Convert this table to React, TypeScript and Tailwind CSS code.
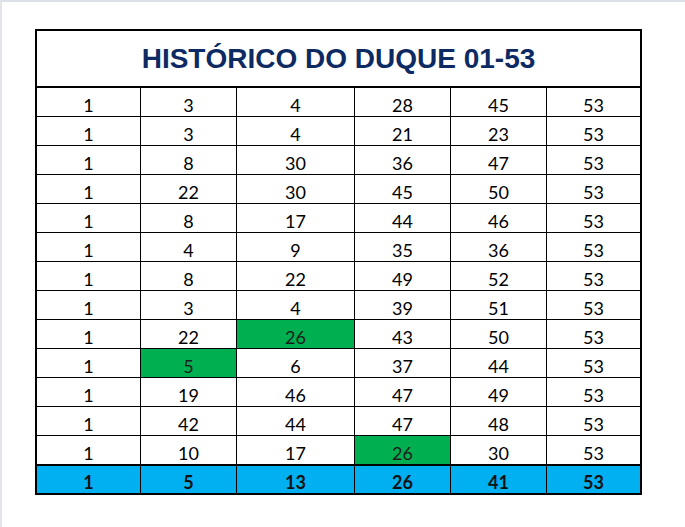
import React from "react";

const rows: number[][] = [
  [1, 3, 4, 28, 45, 53],
  [1, 3, 4, 21, 23, 53],
  [1, 8, 30, 36, 47, 53],
  [1, 22, 30, 45, 50, 53],
  [1, 8, 17, 44, 46, 53],
  [1, 4, 9, 35, 36, 53],
  [1, 8, 22, 49, 52, 53],
  [1, 3, 4, 39, 51, 53],
  [1, 22, 26, 43, 50, 53],
  [1, 5, 6, 37, 44, 53],
  [1, 19, 46, 47, 49, 53],
  [1, 42, 44, 47, 48, 53],
  [1, 10, 17, 26, 30, 53],
];

const green: Record<string, boolean> = {
  "8-2": true,
  "9-1": true,
  "12-3": true,
};

const totals = [1, 5, 13, 26, 41, 53];

export default function App() {
  return (
    <div className="w-[685px] h-[527px] bg-white border-t-2 border-l-2 border-t-[#dde2e8] border-l-[#e1e5ea] pt-[27px] pl-[33px] overflow-hidden">
      <div className="w-[607px] border-2 border-black bg-white">
        <div
          className="h-[57px] border-b-2 border-black flex items-center justify-center text-[28px] font-bold text-[#0d2a63]"
          style={{ fontFamily: '"Liberation Sans", Arial, sans-serif' }}
        >
          HISTÓRICO DO DUQUE 01-53
        </div>
        <div
          className="grid grid-cols-[104px_96px_118px_96px_96px_93px] text-[18px] text-black"
          style={{ fontFamily: 'Lato, "Open Sans", sans-serif' }}
        >
          {rows.map((r, ri) =>
            r.map((v, ci) => {
              const isLast = ri === rows.length - 1;
              const g = green[`${ri}-${ci}`];
              return (
                <div
                  key={`${ri}-${ci}`}
                  className={`flex items-center justify-center border-black pt-[6px] leading-none ${
                    isLast ? "h-[30px] border-b-2" : "h-[29px] border-b"
                  } ${ci < 5 ? "border-r" : ""} ${g ? "bg-[#00b050] text-[#1c1c1c]" : ""}`}
                >
                  {v}
                </div>
              );
            })
          )}
          {totals.map((v, ci) => (
            <div
              key={`t-${ci}`}
              className={`h-[27px] flex items-center justify-center font-bold bg-[#00b0f0] text-[#111] border-black pt-[5px] leading-none ${
                ci < 5 ? "border-r" : ""
              }`}
            >
              {v}
            </div>
          ))}
        </div>
      </div>
    </div>
  );
}
